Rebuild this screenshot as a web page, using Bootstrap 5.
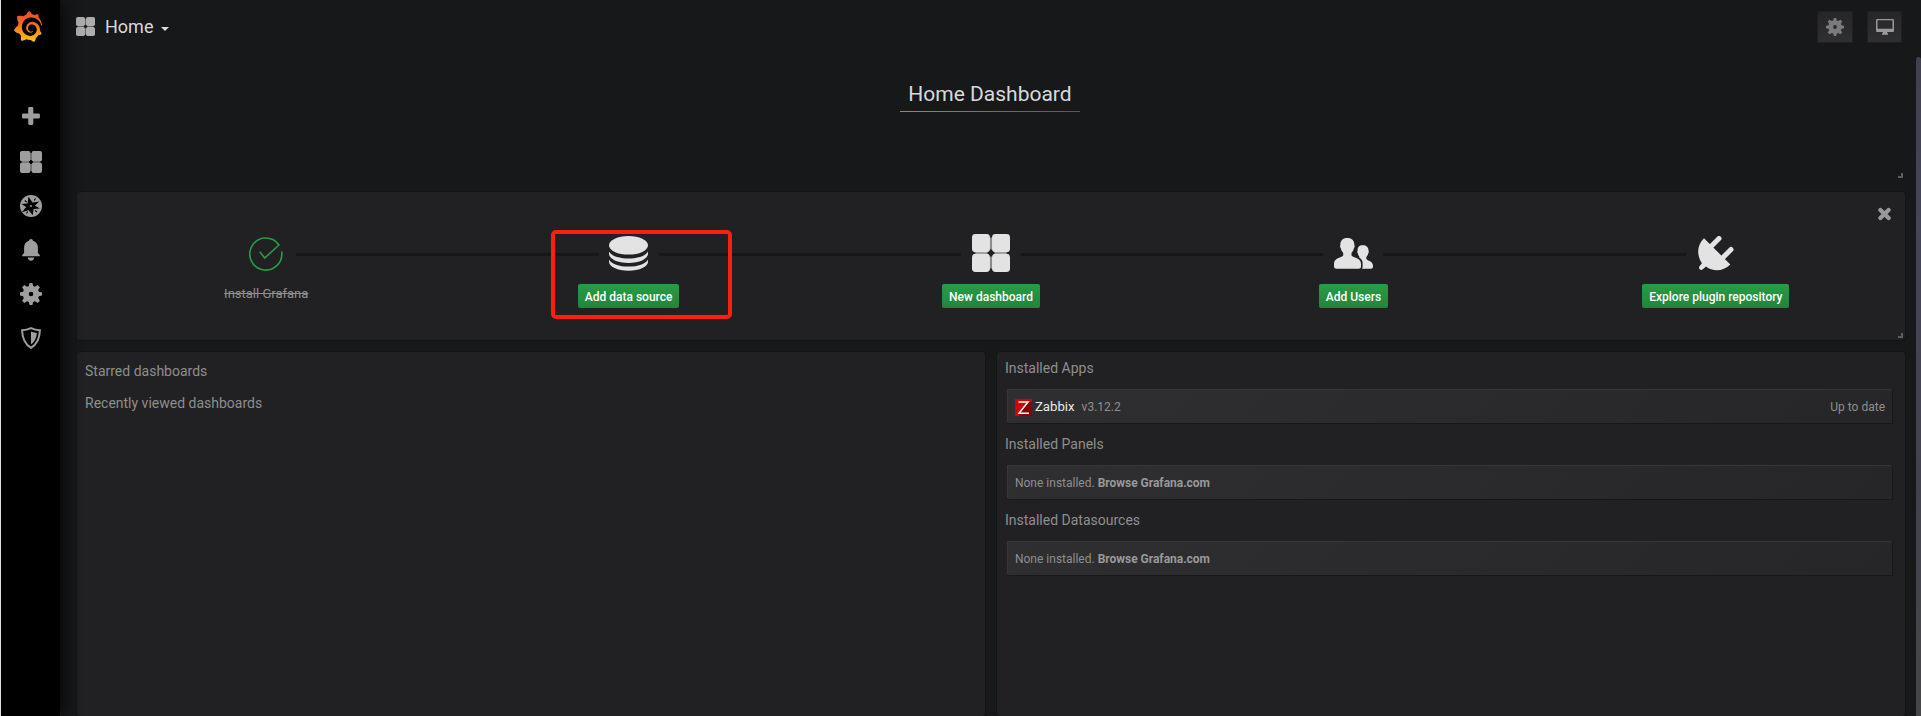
<!DOCTYPE html>
<html lang="en" data-bs-theme="dark">
<head>
<meta charset="utf-8">
<title>Home Dashboard</title>
<link rel="stylesheet" href="https://cdn.jsdelivr.net/npm/bootstrap@5.3.0/dist/css/bootstrap.min.css">
<style>
  body { background: #171819; color: #8e8e8e; font-family: Roboto, sans-serif; font-size: 14px; line-height: 20px; height: 716px; overflow: hidden; }
  svg { display: block; flex: none; }
  .sidemenu { width: 60px; background: #000; border-left: 1px solid #dfdfdf; box-shadow: 0 0 20px #000; z-index: 2; padding-top: 11px; color: #9e9e9e; }
  .sidemenu .menu-items { margin-top: 54px; }
  .sidemenu .menu-items > a { height: 44px; color: inherit; padding-left: 1px; }
  .sidemenu .menu-items > a:first-child { padding-bottom: 5px; }
  .sidemenu .logo { width: 28px; margin-left: 13px; }
  .topnav { height: 53px; padding: 0 19px 0 16px; }
  .page-title { font-size: 18px; color: #d8d9da; margin-left: 10px; }
  .tri { border: 4px solid transparent; border-top-color: #d8d9da; border-bottom: 0; margin: 4px 0 0 8px; }
  .navbtn { height: 32px; border-radius: 2px; background: linear-gradient(#262628, #303032); box-shadow: 0 0 0 1px #1f2021 inset; color: #7b7b7b; }
  .navbtn.set { width: 36px; margin-right: 14px; }
  .navbtn.tv { width: 35px; color: #999; }
  .grid-area { padding: 0 16px 0 17px; }
  .panel { background: #212124; border-radius: 3px; box-shadow: 0 0 0 1px #141414; }
  .corner { right: 2px; bottom: 2px; width: 5px; height: 5px; border: solid #5c5d5e; border-width: 0 2px 2px 0; }
  .title-panel { height: 127px; padding: 26px 2px 0 0; }
  .dash-title { font-size: 21px; line-height: 30px; color: #d8d9da; width: 180px; padding-bottom: 2px; border-bottom: 1px solid; border-image: linear-gradient(90deg, #b58a10, #a63a12) 1; white-space: nowrap; }
  .steps { height: 148px; margin-top: 12px; padding: 0 8px; }
  .step { padding-top: 42px; }
  .step:not(.last)::after { content: ""; position: absolute; left: calc(50% + 30px); width: calc(100% - 60px); top: 61px; height: 3px; background: #161719; }
  .step-icon { height: 40px; color: #e3e3e3; }
  .step-icon.raised { padding-bottom: 2px; }
  .step-btn { margin-top: 10px; height: 24px; border-radius: 2px; padding: 0 7px; background: linear-gradient(#299c46, #23843b); color: #fff; font-size: 12px; font-weight: 500; line-height: 26px; }
  .step-done { margin-top: 10px; font-size: 13px; text-decoration: line-through; }
  .close-x { right: 14px; top: 15px; color: #999; }
  .callout { left: 474px; top: 38px; width: 181px; height: 89px; border: 4px solid #fb1f11; border-radius: 5px; z-index: 3; }
  .lower { margin-top: 12px; gap: 12px; }
  .lower .panel { height: 364px; width: 50%; }
  .stars { padding: 9px 8px; }
  .stars div { height: 32px; }
  .plugins { padding: 6px 13px 0 11px; }
  .plugins h6 { font-size: 14px; line-height: 20px; font-weight: 400; margin: 0 0 12px -3px; color: #8e8e8e; }
  .plugin { height: 33px; margin-bottom: 11px; padding: 1px 7px 0; font-size: 12px; background: linear-gradient(135deg, #2f2f32, #262628); box-shadow: -1px -1px 0 0 rgba(255,255,255,.1), 1px 1px 0 0 rgba(0,0,0,.3); }
  .plugin .name { font-size: 13.2px; color: #e9e9e9; margin: 0 7px 0 3px; }
  .plugin b { color: #999; margin-left: 3px; letter-spacing: -.02px; }
  .scrollthumb { right: 0; top: 57px; bottom: 0; width: 5px; border-radius: 3px 3px 0 0; background: linear-gradient(#404150, #45455a 25%, #424250 60%, #464648); }
</style>
<script src="https://cdn.jsdelivr.net/npm/bootstrap@5.3.0/dist/js/bootstrap.bundle.min.js"></script>
</head>
<body class="d-flex position-relative">
<svg width="0" height="0" class="position-absolute">
  <defs>
    <linearGradient id="sun" x1="0" y1="0" x2="0" y2="1"><stop offset="0" stop-color="#f04e28"/><stop offset=".35" stop-color="#f1602a"/><stop offset="1" stop-color="#fdc70b"/></linearGradient>
    <symbol id="tiles" viewBox="0 0 22 22"><path fill="currentColor" opacity=".55" d="M2 10h7v2H2zM13 10h7v2h-7zM10 2h2v7h-2zM10 13h2v7h-2z"/><g fill="currentColor"><rect width="10.400" height="10.500" rx="2"/><rect x="11.600" width="10.400" height="10.500" rx="2"/><rect y="11.500" width="10.400" height="10.500" rx="2"/><rect x="11.600" y="11.500" width="10.400" height="10.500" rx="2"/></g></symbol>
    <symbol id="gear" viewBox="0 0 22 22"><path fill="currentColor" fill-rule="evenodd" d="M9.600 0h2.800l.8 3.100 1.700.7 2.800-1.700 2.200 2.200-1.700 2.800.7 1.700 3.100.8v2.800l-3.100.8-.7 1.700 1.700 2.800-2.200 2.200-2.800-1.700-1.700.7-.8 3.100H9.600l-.8-3.100-1.700-.7-2.800 1.700-2.200-2.200 1.700-2.800-.7-1.700L0 12.400V9.600l3.100-.8.7-1.700L2.100 4.300l2.200-2.200 2.800 1.700 1.700-.7zM11 8.700a2.300 2.300 0 1 0 0 4.600 2.300 2.300 0 0 0 0-4.600z"/></symbol>
  </defs>
</svg>

<nav class="sidemenu d-flex flex-column flex-shrink-0 position-relative vh-100">
  <a class="logo" href="#"><svg width="28" height="31" viewBox=".9 0 22.200 24" preserveAspectRatio="none"><path fill="url(#sun)" d="M23.02 10.59a8.578 8.578 0 0 0-.862-3.034 8.911 8.911 0 0 0-1.789-2.445c.337-1.342-.413-2.505-.413-2.505-1.292-.08-2.113.4-2.416.62-.052-.02-.102-.044-.154-.064-.22-.089-.446-.172-.677-.247-.231-.073-.47-.14-.711-.197a9.867 9.867 0 0 0-.875-.161C14.557.753 12.94 0 12.94 0c-1.804 1.145-2.147 2.744-2.147 2.744l-.018.093c-.098.029-.2.057-.298.088-.138.042-.275.094-.413.143-.138.055-.275.107-.41.166a8.869 8.869 0 0 0-1.557.87l-.063-.029c-2.497-.955-4.716.195-4.716.195-.203 2.658.996 4.33 1.235 4.636a11.608 11.608 0 0 0-.607 2.635C1.636 12.677.953 15.014.953 15.014c1.926 2.214 4.171 2.351 4.171 2.351.003-.002.006-.002.006-.005.285.509.615.994.986 1.446.156.19.32.371.488.548-.704 2.009.099 3.68.099 3.68 2.144.08 3.553-.937 3.849-1.173a9.784 9.784 0 0 0 3.164.501h.08l.055-.003.107-.002.103-.005.003.002c1.01 1.44 2.788 1.646 2.788 1.646 1.264-1.332 1.337-2.653 1.337-2.94v-.058c0-.02-.003-.039-.003-.06.265-.187.52-.387.758-.6a7.875 7.875 0 0 0 1.415-1.7c1.43.083 2.437-.885 2.437-.885-.236-1.49-1.085-2.216-1.264-2.354l-.018-.013-.016-.013a.217.217 0 0 1-.031-.02c.008-.092.016-.18.02-.27.011-.162.016-.323.016-.48v-.253l-.005-.098-.008-.135a1.891 1.891 0 0 0-.01-.13c-.003-.042-.008-.083-.013-.125l-.016-.124-.018-.122a6.215 6.215 0 0 0-2.032-3.73 6.015 6.015 0 0 0-3.222-1.46 6.292 6.292 0 0 0-.85-.048l-.107.002h-.063l-.044.003-.104.008a4.777 4.777 0 0 0-3.335 1.695c-.332.4-.592.84-.768 1.297a4.594 4.594 0 0 0-.312 1.817l.003.091c.005.055.007.11.013.164a3.615 3.615 0 0 0 .698 1.82 3.53 3.53 0 0 0 1.827 1.282c.33.098.66.14.971.137.039 0 .078 0 .114-.002l.063-.003c.02 0 .041-.003.062-.003.034-.002.065-.007.099-.01.007 0 .018-.003.028-.003l.031-.005.06-.008a1.18 1.18 0 0 0 .112-.02c.036-.008.072-.013.109-.024a2.634 2.634 0 0 0 .914-.415c.028-.02.056-.041.085-.065a.248.248 0 0 0 .039-.35.244.244 0 0 0-.309-.06l-.078.042c-.09.044-.184.083-.283.116a2.476 2.476 0 0 1-.475.096c-.028.003-.054.006-.083.006l-.083.002c-.026 0-.054 0-.08-.002l-.102-.006h-.012l-.024.006c-.016-.003-.031-.003-.044-.006-.031-.002-.06-.007-.091-.01a2.59 2.59 0 0 1-.724-.213 2.557 2.557 0 0 1-.667-.438 2.52 2.52 0 0 1-.805-1.475 2.306 2.306 0 0 1-.029-.444l.006-.122v-.023l.002-.031c.003-.021.003-.04.005-.06a3.163 3.163 0 0 1 1.352-2.29 3.12 3.12 0 0 1 .937-.43 2.946 2.946 0 0 1 .776-.101h.06l.07.002.045.003h.026l.07.005a4.041 4.041 0 0 1 1.635.49 3.94 3.94 0 0 1 1.602 1.662 3.77 3.77 0 0 1 .397 1.414l.005.076.003.075c.002.026.002.05.002.075 0 .024.003.052 0 .07v.065l-.002.073-.008.174a6.195 6.195 0 0 1-.08.639 5.1 5.1 0 0 1-.267.927 5.31 5.31 0 0 1-.624 1.13 5.052 5.052 0 0 1-3.237 2.014 4.82 4.82 0 0 1-.649.066l-.039.003h-.287a6.607 6.607 0 0 1-1.716-.265 6.776 6.776 0 0 1-3.4-2.274 6.75 6.75 0 0 1-.746-1.15 6.616 6.616 0 0 1-.714-2.596l-.005-.083-.002-.02v-.056l-.003-.073v-.096l-.003-.104v-.07l.003-.163c.008-.22.026-.45.054-.678a8.707 8.707 0 0 1 .28-1.355c.128-.444.286-.872.473-1.277a7.04 7.04 0 0 1 1.456-2.1 5.925 5.925 0 0 1 .953-.763c.169-.111.343-.213.524-.306.089-.05.182-.091.273-.135.047-.02.093-.042.138-.062a7.177 7.177 0 0 1 .714-.267l.145-.045c.049-.015.098-.026.148-.041.098-.029.197-.052.296-.076.049-.013.1-.02.15-.033l.15-.032.151-.028.076-.013.075-.01.153-.024c.057-.01.114-.013.171-.023l.169-.021c.036-.003.073-.008.106-.01l.073-.008.036-.003.042-.002c.057-.003.114-.008.171-.01l.086-.006h.023l.037-.003.145-.007a7.999 7.999 0 0 1 1.708.125 7.917 7.917 0 0 1 2.048.68 8.253 8.253 0 0 1 1.672 1.09l.09.077.089.078c.06.052.114.107.171.159.057.052.112.106.166.16.052.055.107.107.159.164a8.671 8.671 0 0 1 1.41 1.978c.012.026.028.052.04.078l.04.078.075.156c.023.051.05.1.07.153l.065.15a8.848 8.848 0 0 1 .45 1.34.19.19 0 0 0 .201.142.186.186 0 0 0 .172-.184c.01-.246.002-.532-.024-.856z"/></svg></a>
  <div class="menu-items">
    <a class="d-flex align-items-center justify-content-center" href="#"><svg width="18" height="18" viewBox="0 0 18 18"><path fill="currentColor" d="M7.500 0h2.500q1.300 0 1.300 1.300v5.200h5.300q1.300 0 1.300 1.300v2.500q0 1.300-1.300 1.300h-5.300v5q0 1.300-1.300 1.300H7.500q-1.300 0-1.300-1.300v-5H1.300Q0 11.600 0 10.300V7.800q0-1.300 1.300-1.300h4.900V1.300Q6.200 0 7.500 0z"/></svg></a>
    <a class="d-flex align-items-center justify-content-center" href="#"><svg width="22" height="22"><use href="#tiles"/></svg></a>
    <a class="d-flex align-items-center justify-content-center" href="#"><svg width="22" height="22" viewBox="0 0 22 22"><circle cx="11" cy="11" r="11" fill="currentColor"/><path fill="#000" d="M8.500 1.800l4.100 5.600 6.600-.9-4.300 4.300 5 2.800-6.200.4-1 6.200-4.200-4.900-6.600 1.900 4.300-5.200-4.800-2.900 6.200-.5z"/><path stroke="#000" stroke-width="1.100" d="M4.800 5.500l2 1.600M17 17l-2-1.700M15.500 3.500l-1.300 2M6.500 18.500l1.200-2"/><circle cx="11" cy="11" r="1" fill="currentColor"/></svg></a>
    <a class="d-flex align-items-center justify-content-center" href="#"><svg width="18" height="22" viewBox="0 0 18 22"><path fill="currentColor" d="M9 0c1.200 0 1.900.8 1.900 1.700 3.300.9 5 3.500 5 7v5.300l1.900 2v1.300H.2V16l1.900-2V8.700c0-3.500 1.700-6.100 5-7C7.100.8 7.800 0 9 0zM5.700 18.500h6.600c-.3 1.900-1.500 3.300-3.300 3.300s-3-1.400-3.300-3.300z"/></svg></a>
    <a class="d-flex align-items-center justify-content-center" href="#"><svg width="22" height="22"><use href="#gear"/></svg></a>
    <a class="d-flex align-items-center justify-content-center" href="#"><svg width="20" height="22" viewBox="0 0 20 22"><path fill="none" stroke="currentColor" stroke-width="2" d="M10 1.200c2.800 1.400 5.700 2 8.900 2C18.700 11 16.500 17 10 20.800 3.500 17 1.300 11 1.100 3.200c3.200 0 6.100-.6 8.900-2z"/><path fill="currentColor" d="M10 4.600c2 .9 3.800 1.300 5.900 1.400-.4 5-2.300 8.800-5.900 11.400z"/></svg></a>
  </div>
</nav>

<main class="flex-grow-1">
  <header class="topnav d-flex align-items-center">
    <svg width="19" height="19" color="#adadad"><use href="#tiles"/></svg>
    <span class="page-title">Home</span><i class="tri"></i>
    <button class="btn p-0 border-0 navbtn set ms-auto d-flex align-items-center justify-content-center"><svg width="18" height="18"><use href="#gear"/></svg></button>
    <button class="btn p-0 border-0 navbtn tv d-flex align-items-center justify-content-center"><svg width="18" height="16" viewBox="0 0 18 16"><path fill="currentColor" fill-rule="evenodd" d="M1.300 0h15.400q1.300 0 1.300 1.300v10.400q0 1.300-1.300 1.300H11l1 2v.8H6V15l1-2H1.300Q0 13 0 11.700V1.300Q0 0 1.300 0zm.2 1.300v8.400h15V1.300z"/></svg></button>
  </header>

  <div class="grid-area">
    <section class="title-panel position-relative d-flex flex-column align-items-center">
      <div class="dash-title text-center">Home Dashboard</div>
      <i class="corner position-absolute"></i>
    </section>

    <section class="panel steps position-relative d-flex">
      <div class="step col position-relative d-flex flex-column align-items-center">
        <div class="step-icon d-flex align-items-center"><svg width="34" height="34" viewBox="0 0 34 34" fill="none" stroke="#299c46" stroke-width="1.600"><path d="M32.600 14.500A16 16 0 1 1 30 8L15.700 21l-5-6.300"/></svg></div>
        <div class="step-done">Install Grafana</div>
      </div>
      <div class="step col position-relative d-flex flex-column align-items-center">
        <div class="step-icon raised d-flex align-items-center"><svg width="39" height="35" viewBox="0 0 39 35" fill="currentColor"><ellipse cx="19.500" cy="9.300" rx="19.500" ry="9.300"/><path d="M0 15.500c2.500 4.600 10 7 19.500 7s17-2.400 19.500-7v2.200c0 5.200-8.500 9.300-19.500 9.300S0 22.900 0 17.700zM0 23.500c2.500 4.600 10 7.100 19.500 7.100s17-2.500 19.500-7.100v2c0 5.200-8.500 9.300-19.500 9.300S0 30.700 0 25.500z"/></svg></div>
        <a class="btn border-0 step-btn py-0">Add data source</a>
      </div>
      <div class="step col position-relative d-flex flex-column align-items-center">
        <div class="step-icon raised d-flex align-items-center"><svg width="38" height="38"><use href="#tiles"/></svg></div>
        <a class="btn border-0 step-btn py-0">New dashboard</a>
      </div>
      <div class="step col position-relative d-flex flex-column align-items-center">
        <div class="step-icon raised d-flex align-items-center"><svg width="39" height="31" viewBox="0 0 39 31" fill="currentColor"><path d="M13.300 0c4.700 0 7.200 2.800 7 7 .6.700.5 2.600-.4 3.200-.5 2.500-1.500 3.600-2.400 4.600v2.600c1.500 2.200 9.500 2.300 9.500 8.300v2.600q0 2.500-2.500 2.500H2.500Q0 30.800 0 28.300v-2.600c0-6 7.700-6.100 9.200-8.300v-2.600c-.9-1-1.900-2.100-2.400-4.600-.9-.6-1-2.500-.4-3.200-.2-4.200 2.200-7 6.900-7z"/><path d="M28.800 7.200c3.800 0 5.900 2.200 5.700 5.600.5.600.4 2-.3 2.600-.4 2-1.200 2.800-1.900 3.600v2c1.200 1.800 6.700 2.100 6.700 6.700v1q0 2.100-2 2.100h-9q.6-.8.600-2v-4.500c-.3-2.300-1.600-3.800-3.400-4.900.1-.4.100-.400.100-.8-.7-.8-1.100-1.700-1.400-3.200-.8-.6-.9-2-.3-2.600-.2-3.400 1.400-5.600 5.200-5.600z"/></svg></div>
        <a class="btn border-0 step-btn py-0">Add Users</a>
      </div>
      <div class="step last col position-relative d-flex flex-column align-items-center">
        <div class="step-icon raised d-flex align-items-center"><svg width="36" height="35" viewBox="0 0 36 35" fill="currentColor"><path d="M6 2.200l26.300 26.300C25.500 35.500 15 36 8 30.500L4.500 33.500c-1.700 1.300-4.600-1-3-3.200l2.400-3C-1.500 19-1.200 9 6 2.200z"/><path stroke="currentColor" stroke-width="5" stroke-linecap="round" d="M13 10.500l8-8M24.500 22l8.500-8.500"/></svg></div>
        <a class="btn border-0 step-btn py-0">Explore plugin repository</a>
      </div>
      <svg class="close-x position-absolute" width="13" height="14" viewBox="0 0 13 14"><path stroke="currentColor" stroke-width="4.200" stroke-linecap="round" d="M2.400 2.900l8.200 8.200M10.600 2.900l-8.200 8.200"/></svg>
      <div class="callout position-absolute"></div>
      <i class="corner position-absolute"></i>
    </section>

    <div class="lower d-flex">
      <section class="panel stars">
        <div>Starred dashboards</div>
        <div>Recently viewed dashboards</div>
      </section>
      <section class="panel plugins">
        <h6>Installed Apps</h6>
        <div class="plugin d-flex align-items-center">
          <svg width="17" height="17" viewBox="0 0 17 17"><path fill="#d40000" d="M0 0h17v17H0z"/><path fill="#850000" d="M13 3l4 0v14H4z"/><path fill="none" stroke="#fff" stroke-width="1.500" d="M3.500 3H13L4 14.300h10"/></svg>
          <span class="name">Zabbix</span><span>v3.12.2</span><span class="ms-auto">Up to date</span>
        </div>
        <h6>Installed Panels</h6>
        <div class="plugin d-flex align-items-center">None installed. <b>Browse Grafana.com</b></div>
        <h6>Installed Datasources</h6>
        <div class="plugin d-flex align-items-center">None installed. <b>Browse Grafana.com</b></div>
      </section>
    </div>
  </div>
</main>
<div class="scrollthumb position-absolute"></div>
</body>
</html>
